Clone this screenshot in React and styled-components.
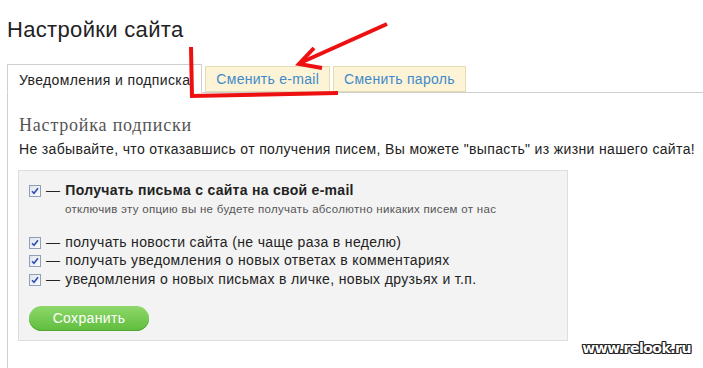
import React from "react";
import styled, { createGlobalStyle } from "styled-components";

const Global = createGlobalStyle`
  html, body { margin: 0; padding: 0; height: 100%; overflow: hidden; background: #fff; }
  body { font-family: "Liberation Sans", Arial, sans-serif; color: #222; }
  #root { height: 100%; }
`;

const Page = styled.div`
  position: relative;
  height: 100%;
  padding-left: 7px;
  display: flex;
  flex-direction: column;
  box-sizing: border-box;
`;

const Title = styled.h1`
  margin: 0;
  padding-top: 17px;
  font-family: "Liberation Sans", Arial, sans-serif;
  font-weight: normal;
  font-size: 22px;
  letter-spacing: 0.33px;
  line-height: 26px;
  color: #222;
`;

const TabBar = styled.div`
  margin-top: 21px;
  display: flex;
  align-items: flex-end;
  gap: 3px;
  border-bottom: 1px solid #cfcfcf;
  height: 28px;
`;

const Tab = styled.div`
  box-sizing: border-box;
  height: ${(p) => (p.$active ? "29px" : "26px")};
  margin-bottom: ${(p) => (p.$active ? "-1px" : "0")};
  padding: ${(p) => (p.$active ? "2px 11px 0" : "0 10px")};
  display: flex;
  align-items: center;
  font-size: 14px;
  letter-spacing: ${(p) => (p.$active ? "0.38px" : "0.28px")};
  white-space: nowrap;
  background: ${(p) => (p.$active ? "#fff" : "#fdf3d6")};
  border: 1px solid ${(p) => (p.$active ? "#cfcfcf" : "#e6dcb3")};
  border-bottom-color: ${(p) => (p.$active ? "#fff" : "#e6dcb3")};
  color: ${(p) => (p.$active ? "#222" : "#3d8acb")};
`;

const Panel = styled.div`
  flex: 1;
  border-left: 1px solid #cfcfcf;
  padding: 0 0 0 11px;
`;

const Heading = styled.h2`
  margin: 21px 0 0;
  font-family: "Liberation Serif", "Times New Roman", serif;
  font-weight: normal;
  font-size: 18px;
  letter-spacing: 0.8px;
  line-height: 22px;
  color: #555;
`;

const Intro = styled.p`
  margin: 4px 0 0;
  font-size: 14px;
  letter-spacing: 0.35px;
  line-height: 18px;
  color: #222;
`;

const OptionsBox = styled.div`
  box-sizing: border-box;
  margin: 12px 0 0 -1px;
  width: 550px;
  height: 171px;
  background: #f3f3f3;
  border: 1px solid #dedede;
  padding: 10px 10px 0;
`;

const Row = styled.div`
  display: flex;
  align-items: center;
  font-size: 14px;
  letter-spacing: 0.35px;
  line-height: 18.7px;
  color: #222;
  margin-top: ${(p) => p.$gap || 0}px;
`;

const Check = styled.span`
  box-sizing: border-box;
  width: 12px;
  height: 12px;
  border: 1px solid #8f9fb8;
  background: linear-gradient(135deg, #dfe4ec, #fbfbfd);
  display: inline-flex;
  align-items: center;
  justify-content: center;
  margin: 1px 5px 0 0;
  flex: none;
`;

const Dash = styled.span`
  margin-right: 5px;
`;

const Strong = styled.span`
  font-weight: bold;
  letter-spacing: 0.28px;
`;

const Hint = styled.div`
  margin: 1px 0 0 36px;
  font-size: 11.5px;
  letter-spacing: 0.3px;
  line-height: 16px;
  color: #555;
`;

const SaveButton = styled.button`
  margin-top: 17px;
  width: 120px;
  height: 25px;
  border: none;
  border-radius: 13px;
  background: linear-gradient(#8ed86a, #5fbd3d);
  box-shadow: inset 0 -1px 0 #4fa730;
  color: #fff;
  font-family: "Liberation Sans", Arial, sans-serif;
  font-size: 14px;
  letter-spacing: 0.35px;
  padding: 0;
  cursor: pointer;
`;

const Watermark = styled.div`
  position: absolute;
  right: 12px;
  bottom: 12px;
  font-family: "DejaVu Sans", sans-serif;
  font-weight: bold;
  font-size: 14px;
  letter-spacing: -0.5px;
  color: #fff;
  text-shadow: -1px -1px 0 #222, 1px -1px 0 #222, -1px 1px 0 #222, 1px 1px 0 #222,
    0 1px 0 #222, 0 -1px 0 #222, 1px 0 0 #222, -1px 0 0 #222;
`;

const Overlay = styled.svg`
  position: absolute;
  left: 0;
  top: 0;
  pointer-events: none;
`;

const CheckIcon = () => (
  <Check>
    <svg width="8" height="8" viewBox="0 0 8 8">
      <path d="M1 4.2 L3 6.3 L7 1.2" fill="none" stroke="#2f4fb4" strokeWidth="1.6" />
    </svg>
  </Check>
);

const options = [
  "получать новости сайта (не чаще раза в неделю)",
  "получать уведомления о новых ответах в комментариях",
  "уведомления о новых письмах в личке, новых друзьях и т.п.",
];

export default function App() {
  return (
    <>
      <Global />
      <Page>
        <Title>Настройки сайта</Title>
        <TabBar>
          <Tab $active>Уведомления и подписка</Tab>
          <Tab>Сменить e-mail</Tab>
          <Tab>Сменить пароль</Tab>
        </TabBar>
        <Panel>
          <Heading>Настройка подписки</Heading>
          <Intro>
            Не забывайте, что отказавшись от получения писем, Вы можете "выпасть" из жизни нашего сайта!
          </Intro>
          <OptionsBox>
            <Row>
              <CheckIcon />
              <Dash>—</Dash>
              <Strong>Получать письма с сайта на свой e-mail</Strong>
            </Row>
            <Hint>отключив эту опцию вы не будете получать абсолютно никаких писем от нас</Hint>
            <Row $gap={16}>
              <CheckIcon />
              <Dash>—</Dash>
              {options[0]}
            </Row>
            {options.slice(1).map((t) => (
              <Row key={t}>
                <CheckIcon />
                <Dash>—</Dash>
                {t}
              </Row>
            ))}
            <SaveButton>Сохранить</SaveButton>
          </OptionsBox>
        </Panel>
        <Watermark>www.relook.ru</Watermark>
        <Overlay width="703" height="368" viewBox="0 0 703 368">
          <g stroke="#ee1010" strokeWidth="4" fill="none" strokeLinecap="butt" strokeLinejoin="miter">
            <path d="M191 47 L192 97" />
            <path d="M190 96 L338 93" />
            <path d="M387 24 L300 63" />
            <path d="M314 48 L299 64 L322 68" />
          </g>
        </Overlay>
      </Page>
    </>
  );
}
